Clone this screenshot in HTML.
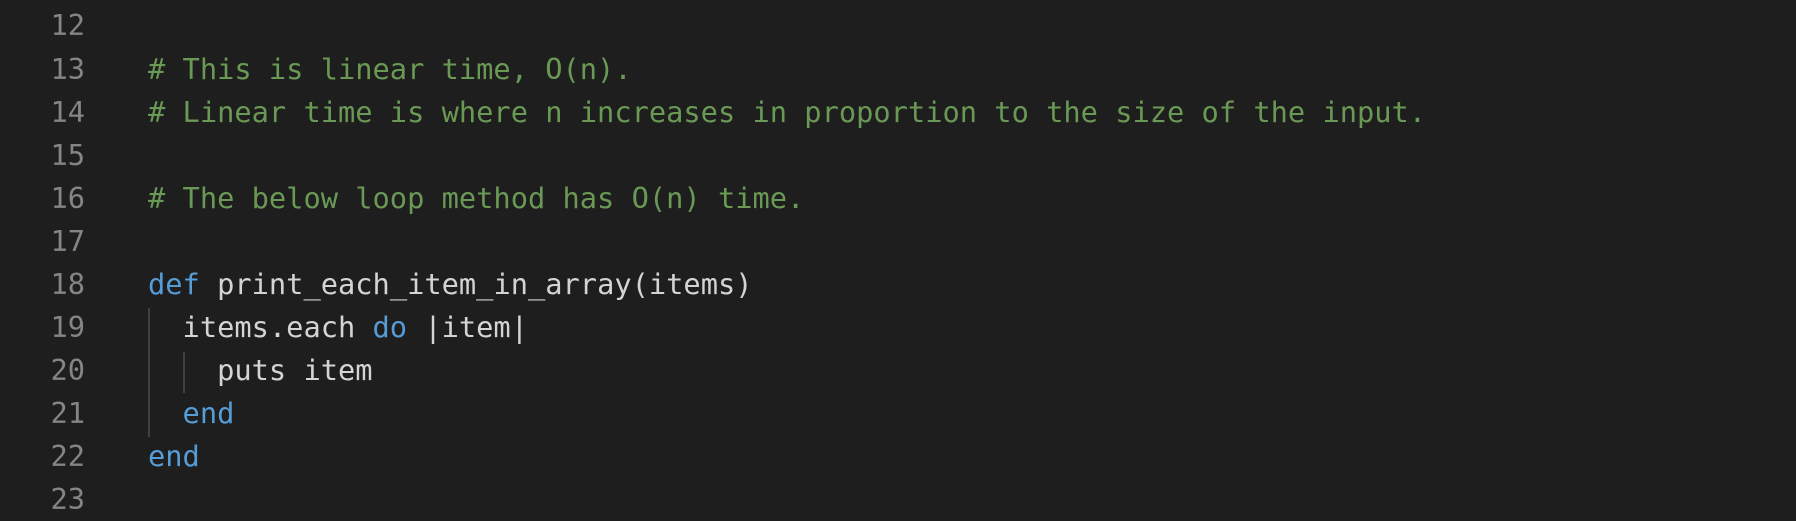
<!DOCTYPE html>
<html><head><meta charset="utf-8"><style>
html,body{margin:0;padding:0;background:#1e1e1e;width:1796px;height:494px;overflow:hidden}
.l{position:absolute;left:0;height:43px;line-height:43px;font-family:"DejaVu Sans Mono",monospace;font-size:28.7px;white-space:pre;color:#d4d4d4}
.n{position:absolute;width:85px;text-align:right;color:#858585;left:0}
.c{position:absolute;left:148px}
.g{color:#6a9955}.k{color:#569cd6}
.guide{position:absolute;width:2px;background:#404040}
</style></head><body>
<div class="l" style="top:4px"><span class="n">12</span></div>
<div class="l" style="top:48px"><span class="n">13</span><span class="c g"># This is linear time, O(n).</span></div>
<div class="l" style="top:91px"><span class="n">14</span><span class="c g"># Linear time is where n increases in proportion to the size of the input.</span></div>
<div class="l" style="top:134px"><span class="n">15</span></div>
<div class="l" style="top:177px"><span class="n">16</span><span class="c g"># The below loop method has O(n) time.</span></div>
<div class="l" style="top:220px"><span class="n">17</span></div>
<div class="l" style="top:263px"><span class="n">18</span><span class="c"><span class="k">def</span> print_each_item_in_array(items)</span></div>
<div class="l" style="top:306px"><span class="n">19</span><span class="c">  items.each <span class="k">do</span> |item|</span></div>
<div class="l" style="top:349px"><span class="n">20</span><span class="c">    puts item</span></div>
<div class="l" style="top:392px"><span class="n">21</span><span class="c">  <span class="k">end</span></span></div>
<div class="l" style="top:435px"><span class="n">22</span><span class="c"><span class="k">end</span></span></div>
<div class="l" style="top:478px"><span class="n">23</span></div>
<div class="guide" style="left:148px;top:308px;height:129px"></div>
<div class="guide" style="left:183px;top:352px;height:41px"></div>
</body></html>
